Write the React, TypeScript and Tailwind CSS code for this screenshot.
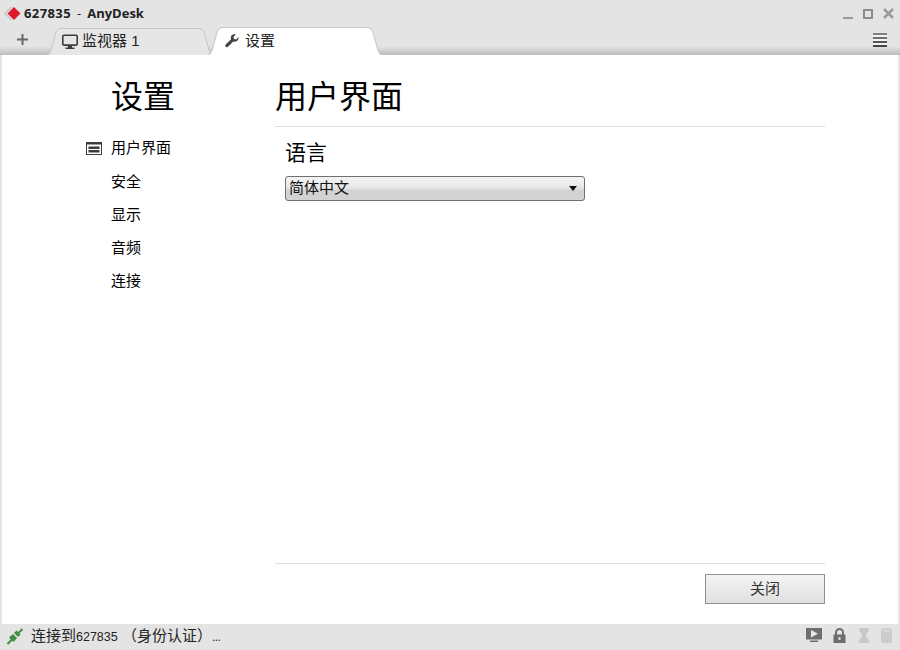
const font = "font-['Liberation_Sans','Noto_Sans_CJK_SC',sans-serif]";

function Logo() {
  return (
    <svg width="17" height="16" viewBox="0 0 17 16" className="shrink-0">
      <path d="M7.500 1 1 7.500 7.500 14" fill="none" stroke="#a8a8a8" strokeWidth="1" />
      <path d="M10 1 16.500 7.500 10 14 3.500 7.500Z" fill="#e0162b" />
    </svg>
  );
}

function MonitorIcon() {
  return (
    <svg width="16" height="16" viewBox="0 0 16 16" className="shrink-0">
      <rect x="0.800" y="1.300" width="14.400" height="9.800" rx="1" fill="none" stroke="#3c3c3c" strokeWidth="1.600" />
      <path d="M6 12h4v1.500h2.500v1.500h-9v-1.500H6z" fill="#3c3c3c" />
    </svg>
  );
}

function WrenchIcon() {
  return (
    <svg width="14" height="14" viewBox="0 0 14 14" className="shrink-0">
      <path d="M13.500 3.300 11 5.500 9 5 8.500 3 10.800.6C9 0 7.300.5 6.400 1.800 5.700 2.900 5.700 4.200 6.100 5.200L.9 10.200c-.8.800-.8 1.800-.1 2.500s1.700.7 2.500-.1l5-5.200c1.100.5 2.500.4 3.700-.4 1.400-1 2-2.900 1.500-4.700z" fill="#444" />
    </svg>
  );
}

function ListIcon() {
  return (
    <svg width="16" height="13" viewBox="0 0 16 13" className="shrink-0">
      <rect width="16" height="13" fill="#3c3c3c" />
      <rect x="1" y="2.500" width="14" height="9.500" fill="#fff" />
      <rect x="2.500" y="4.500" width="11" height="2.500" fill="#3c3c3c" />
      <rect x="2.500" y="8" width="11" height="2.500" fill="#3c3c3c" />
    </svg>
  );
}

function TabShape({ fill, stroke }: { fill: string; stroke: string }) {
  return (
    <svg className="absolute inset-0 w-full h-full" viewBox="0 0 170 28" preserveAspectRatio="none">
      <path d="M0 28 C2 28 3 26 4 23 L9 5 C10 2 12 .5 15 .5 H155 C158 .5 160 2 161 5 L166 23 C167 26 168 28 170 28" fill={fill} stroke={stroke} strokeWidth="1" />
    </svg>
  );
}

const navItems = ["安全", "显示", "音频", "连接"];

export default function App() {
  return (
    <div className={`${font} w-[900px] h-[650px] flex flex-col bg-[#e4e4e4] text-black overflow-hidden`}>
      {/* title bar */}
      <div className="h-[27px] flex items-center pl-[4px] pr-[6px] shrink-0">
        <Logo />
        <span className="ml-[3px] text-[13px] font-bold text-[#222] font-['Open_Sans','Noto_Sans_CJK_SC',sans-serif]">
          <span className="tracking-[0.4px]">627835</span>
          <span className="mx-[6px] font-normal">-</span>
          <span>AnyDesk</span>
        </span>
        <div className="ml-auto flex items-center gap-[10px]">
          <div className="w-[10px] h-[10px] flex items-end"><div className="w-[10px] h-[2px] bg-[#9a9a9a]" /></div>
          <div className="w-[10px] h-[10px] border-2 border-[#8c8c8c]" />
          <svg width="11" height="11" viewBox="0 0 11 11">
            <path d="M1 1l9 9M10 1l-9 9" stroke="#9a9a9a" strokeWidth="2.500" />
          </svg>
        </div>
      </div>
      {/* tabs */}
      <div className="relative h-[28px] shrink-0 flex items-end bg-gradient-to-b from-[#e4e4e4] from-[68%] to-[#bdbdbd]">
        <div className="w-[47px] self-center pl-[17px] -mt-[3px]">
          <svg width="11" height="11" viewBox="0 0 11 11">
            <path d="M4.500 0h2v4.500H11v2H6.500V11h-2V6.500H0v-2h4.500z" fill="#666" />
          </svg>
        </div>
        <div className="relative w-[166px] h-[27px] flex items-center pl-[15px]">
          <TabShape fill="#e6e6e6" stroke="#c4c4c4" />
          <div className="relative flex items-center gap-[4px] text-[15px] text-[#222]">
            <MonitorIcon />
            <span>监视器 1</span>
          </div>
        </div>
        <div className="relative w-[174px] h-[28px] flex items-center pl-[17px] -ml-[5px]">
          <TabShape fill="#ffffff" stroke="#c8c8c8" />
          <div className="relative flex items-center gap-[6px] text-[15px] text-[#222]">
            <WrenchIcon />
            <span>设置</span>
          </div>
        </div>
        <div className="ml-auto self-center mr-[13px] -mt-[2px] flex flex-col gap-[2px] bg-white/60">
          <div className="w-[14px] h-[2px] bg-[#808080]" />
          <div className="w-[14px] h-[2px] bg-[#707070]" />
          <div className="w-[14px] h-[2px] bg-[#555]" />
          <div className="w-[14px] h-[2px] bg-[#444]" />
        </div>
      </div>
      {/* content */}
      <div className="flex-1 mx-[2px] bg-white flex min-h-0">
        <aside className="w-[273px] shrink-0 pl-[84px]">
          <div className="pl-[25px] pt-[19px] h-[77px] text-[32px] leading-[46px]">设置</div>
          <div className="flex items-center h-[33px] gap-[9px] text-[15px] mb-[1px]">
            <ListIcon />
            <span>用户界面</span>
          </div>
          {navItems.map((item) => (
            <div key={item} className="h-[33px] flex items-center pl-[25px] text-[15px]">{item}</div>
          ))}
        </aside>
        <main className="w-[550px] flex flex-col">
          <div className="h-[72px] shrink-0 border-b border-[#dedede] pt-[19px] text-[32px] leading-[46px]">用户界面</div>
          <div className="flex-1 pl-[10px]">
            <div className="mt-[11px] text-[21px] leading-[30px]">语言</div>
            <div className="mt-[8px] w-[300px] h-[25px] rounded-[3px] border border-[#707070] bg-gradient-to-b from-[#f4f4f4] via-[#e8e8e8] via-[45%] to-[#d2d2d2] to-[60%] flex items-center pl-[3px] pr-[7px] text-[15px] text-[#111]">
              <span>简体中文</span>
              <svg width="8" height="5" viewBox="0 0 8 5" className="ml-auto"><path d="M0 0h8L4 5z" fill="#111" /></svg>
            </div>
          </div>
          <div className="h-[61px] shrink-0 border-t border-[#dedede] flex justify-end items-start pt-[10px]">
            <button className="w-[120px] h-[30px] border border-[#8f8f8f] bg-gradient-to-b from-[#f4f4f4] to-[#e0e0e0] text-[15px] text-[#333]">关闭</button>
          </div>
        </main>
      </div>
      {/* status bar */}
      <div className="h-[26px] shrink-0 flex items-center pl-[7px] pr-[8px] text-[#222]">
        <svg width="16" height="17" viewBox="0 0 16 17" className="shrink-0 -mt-[2px]">
          <path d="M15.500 1 11 5.500M.5 16 5 11.500" stroke="#3f8f3f" strokeWidth="2" />
          <path d="M9.500 2.500 13.500 6.500 11 9 7 5z" fill="#3f8f3f" />
          <path d="M6 6 10 10 6.500 14 2 9.500z" fill="#3f8f3f" />
        </svg>
        <span className="ml-[8px] text-[15px] leading-[20px] -mt-[2px]">
          连接到<span className="text-[12.500px]">627835</span> （身份认证）<span className="text-[12px] tracking-[-0.5px]">...</span>
        </span>
        <div className="ml-auto flex items-center -mt-[3px]">
          <svg width="16" height="15" viewBox="0 0 16 15"><rect width="16" height="11.500" fill="#6e6e6e" /><path d="M5 2l7 3.800L5 9.500z" fill="#e8e8e8" /><rect x="4" y="12.500" width="8" height="1.500" fill="#6e6e6e" /></svg>
          <svg width="13" height="15" viewBox="0 0 13 15" className="ml-[11px]"><path d="M3 7V4.500a3.500 3.500 0 0 1 7 0V7" fill="none" stroke="#6e6e6e" strokeWidth="2" /><rect x="0.500" y="6.500" width="12" height="8.500" fill="#6e6e6e" /><rect x="5.500" y="9" width="2" height="3" fill="#ddd" /></svg>
          <svg width="10" height="15" viewBox="0 0 10 15" className="ml-[13px]"><path d="M0 0h10v2L6.500 7.500 10 13v2H0v-2l3.500-5.500L0 2z" fill="#c8c8c8" /></svg>
          <svg width="11" height="15" viewBox="0 0 11 15" className="ml-[12px]"><rect width="11" height="15" rx="2.500" fill="#cbcbcb" /><ellipse cx="5.500" cy="2.500" rx="4" ry="1.500" fill="#d8d8d8" /></svg>
        </div>
      </div>
    </div>
  );
}
